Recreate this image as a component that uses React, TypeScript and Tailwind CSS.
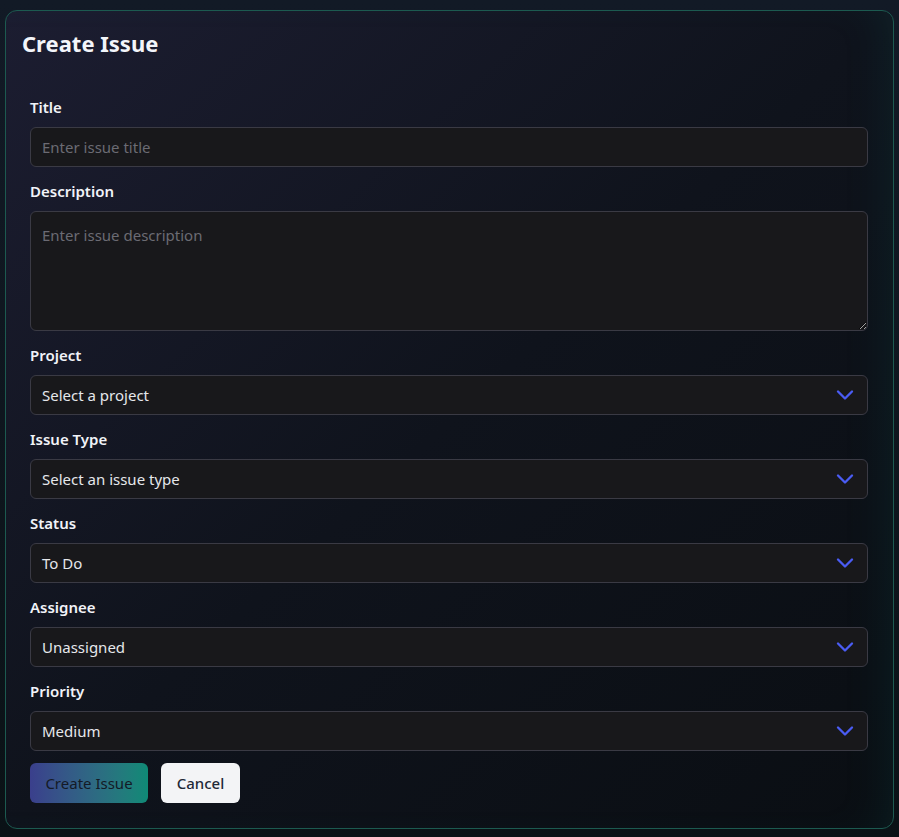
import { ChevronDown } from "lucide-react";

const fieldClass =
  "block h-10 w-full rounded-md border border-[#3a3a44] bg-[#18181b] px-[11px] text-[15px] text-[#e5e7eb] placeholder:text-[#6b6b73] outline-none";

function Label({ children }: { children: string }) {
  return <label className="mb-[10px] block text-[15px] font-semibold leading-5 text-[#f1f3f8]">{children}</label>;
}

function SelectField({ label, value }: { label: string; value: string }) {
  return (
    <div>
      <Label>{label}</Label>
      <div className="relative">
        <div className={fieldClass + " flex items-center"}>{value}</div>
        <ChevronDown className="pointer-events-none absolute right-[9px] top-1/2 h-7 w-7 -translate-y-1/2 text-[#4a5cf4]" strokeWidth={2} />
      </div>
    </div>
  );
}

export default function App() {
  return (
    <div
      className="min-h-[837px] w-full bg-gradient-to-b from-[#121a26] to-[#0a1216] px-[5px] pt-[10px] pb-[9px]"
      style={{ fontFamily: '"Segoe UI", "Noto Sans", sans-serif' }}
    >
      <div className="rounded-xl border border-[#1c5a50] bg-gradient-to-br from-[#1c1d31] via-[#0f131c] to-[#0a0e13] pl-4 pr-[17px] pt-[16px] pb-[25px] shadow-[inset_-30px_0_60px_-40px_rgba(20,184,166,0.15)]">
        <h1 className="text-[22px] font-bold leading-8 text-[#f3f5fa]">Create Issue</h1>

        <form className="mt-[38px] flex flex-col gap-[14px] px-2">
          <div>
            <Label>Title</Label>
            <input className={fieldClass} placeholder="Enter issue title" />
          </div>
          <div>
            <Label>Description</Label>
            <textarea
              className="block h-[120px] w-full rounded-md border border-[#3a3a44] bg-[#18181b] px-[11px] py-[12px] text-[15px] text-[#e5e7eb] placeholder:text-[#6b6b73] outline-none [color-scheme:dark]"
              placeholder="Enter issue description"
            />
          </div>
          <SelectField label="Project" value="Select a project" />
          <SelectField label="Issue Type" value="Select an issue type" />
          <SelectField label="Status" value="To Do" />
          <SelectField label="Assignee" value="Unassigned" />
          <SelectField label="Priority" value="Medium" />

          <div className="-mt-[2px] flex gap-[13px]">
            <button
              type="button"
              className="h-10 w-[118px] rounded-md bg-gradient-to-r from-[#3a3f8c] to-[#0e8a76] text-[15px] text-[#141a26]"
            >
              Create Issue
            </button>
            <button type="button" className="h-10 w-[79px] rounded-md bg-[#f3f4f6] text-[15px] font-medium text-[#1f2937]">
              Cancel
            </button>
          </div>
        </form>
      </div>
    </div>
  );
}
